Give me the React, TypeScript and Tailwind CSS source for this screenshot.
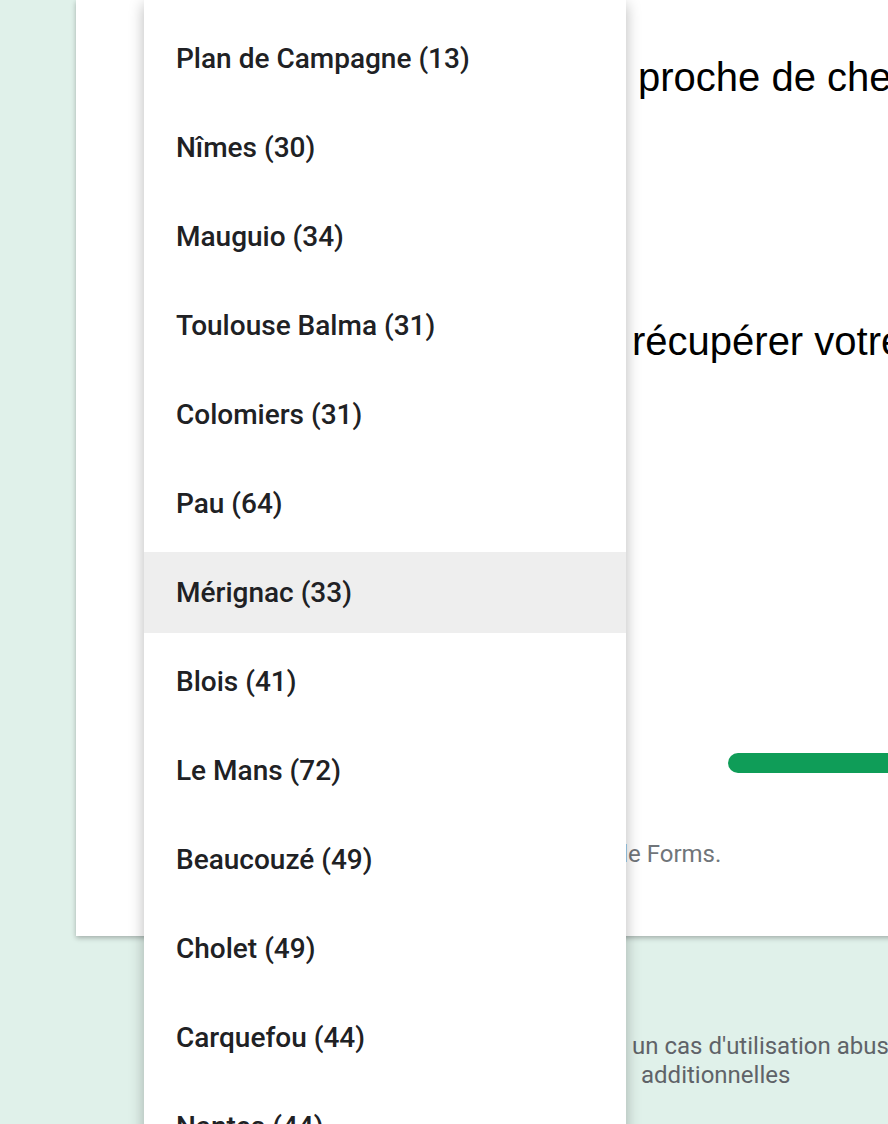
import React from "react";

const items = [
  "Plan de Campagne (13)",
  "Nîmes (30)",
  "Mauguio (34)",
  "Toulouse Balma (31)",
  "Colomiers (31)",
  "Pau (64)",
  "Mérignac (33)",
  "Blois (41)",
  "Le Mans (72)",
  "Beaucouzé (49)",
  "Cholet (49)",
  "Carquefou (44)",
  "Nantes (44)",
];

export default function App() {
  return (
    <div
      className="relative w-[888px] h-[1124px] overflow-hidden bg-[#e0f1ea]"
      style={{ fontFamily: "Roboto, 'Noto Sans', sans-serif" }}
    >
      {/* Form card */}
      <div className="ml-[76px] w-[900px] h-[936px] bg-white shadow-[0_2px_5px_rgba(0,0,0,0.28)] overflow-hidden">
        <div
          className="pt-[54px] pl-[562px] whitespace-nowrap text-[40px] leading-[46px] text-[#000]"
          style={{ fontFamily: "'Liberation Sans', Arial, sans-serif" }}
        >
          proche de chez vous ?
        </div>
        <div
          className="pt-[218px] pl-[556px] whitespace-nowrap text-[40px] leading-[46px] text-[#000]"
          style={{ fontFamily: "'Liberation Sans', Arial, sans-serif" }}
        >
          récupérer votre magasin
        </div>
        <div className="pt-[389px] pl-[652px]">
          <div className="h-[20px] w-[400px] rounded-full bg-[#0f9d58]" />
        </div>
        <div className="pt-[66px] pl-[489px] whitespace-nowrap text-[24px] leading-[30px] text-[#70757a]">
          Google Forms.
        </div>
      </div>

      {/* Footer */}
      <div className="pt-[96px] whitespace-nowrap text-[24px] leading-[29px] text-[#5f6368]">
        <div className="pl-[632px]">un cas d'utilisation abusive</div>
        <div className="pl-[641px]">additionnelles</div>
      </div>

      {/* Dropdown menu overlay */}
      <div className="absolute left-[144px] top-0 w-[482px] h-[1200px] bg-white shadow-[0_4px_14px_rgba(0,0,0,0.28)] pt-[14px]">
        {items.map((t) => (
          <div key={t} className="py-[4px]">
            <div
              className={
                "h-[81px] flex items-center px-[32px] text-[28px] font-medium text-[#202124] whitespace-nowrap " +
                (t === "Mérignac (33)" ? "bg-[#eeeeee]" : "")
              }
            >
              {t}
            </div>
          </div>
        ))}
      </div>
    </div>
  );
}
